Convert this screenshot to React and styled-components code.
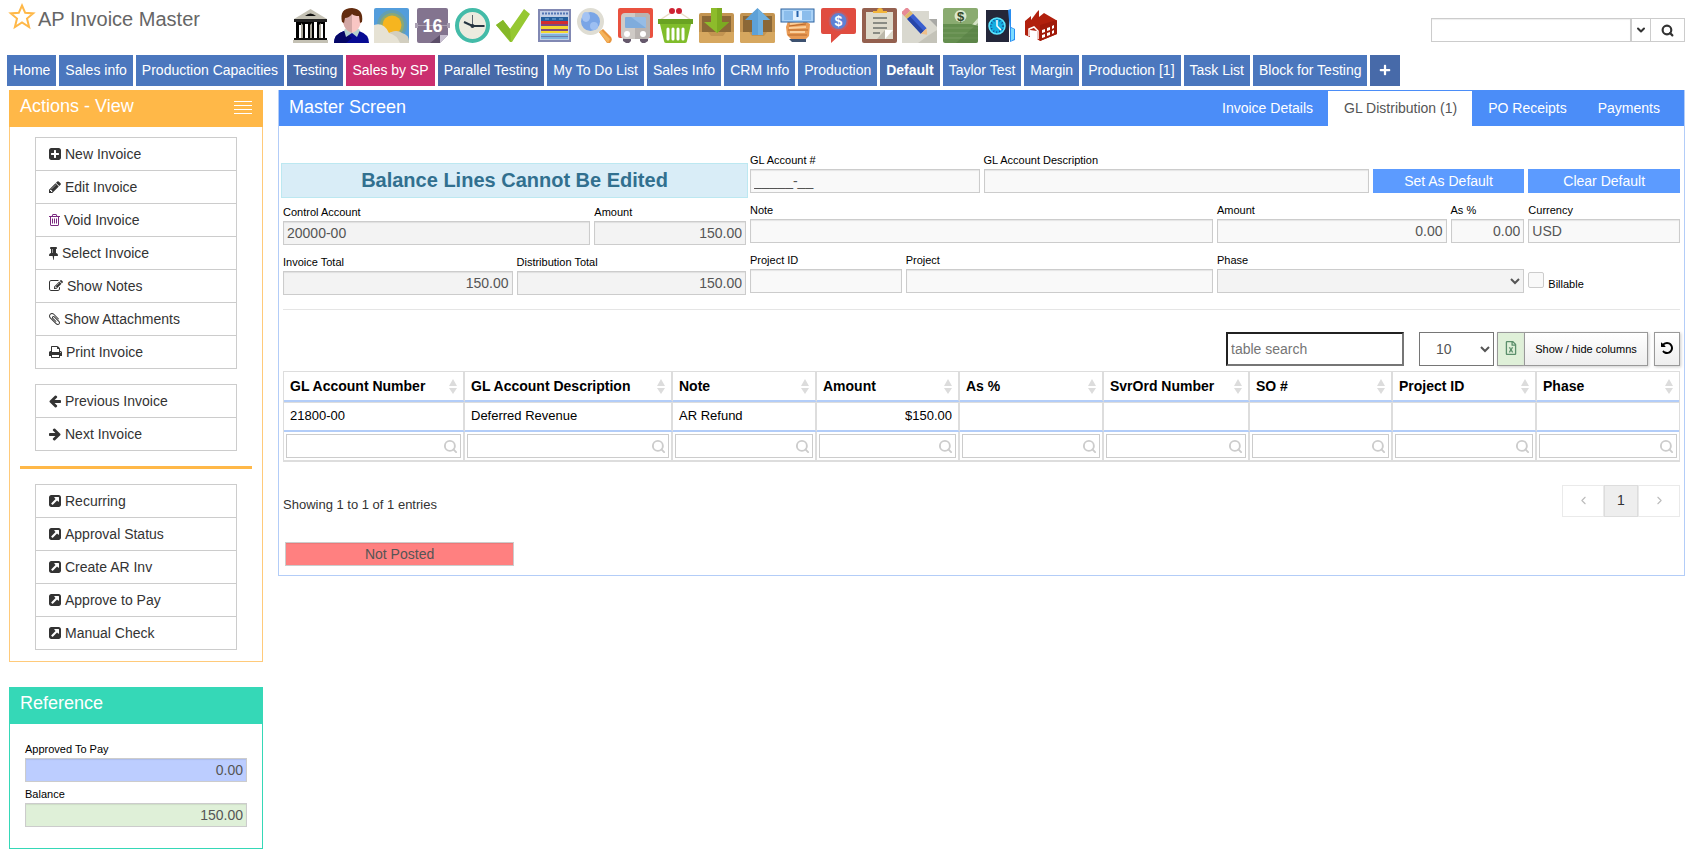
import React from 'react';
import styled, { createGlobalStyle } from 'styled-components';
import { FaRegFileExcel, FaPlus } from 'react-icons/fa';
import { ChevronDown, ChevronLeft, ChevronRight, Search } from 'lucide-react';

const GlobalStyle = createGlobalStyle`
  * {
    box-sizing: border-box;
  }
  body {
    margin: 0;
    background: #fff;
    color: #333;
    font-family: "Liberation Sans", Arial, sans-serif;
    font-size: 14px;
  }
  button, input, select {
    font-family: inherit;
    margin: 0;
    border-radius: 0;
  }
`;

const Header = styled.header`
  display: flex;
  align-items: flex-start;
  justify-content: space-between;
  height: 55px;
  padding: 0 5px 0 8px;
`;

const TitleBar = styled.div`
  display: flex;
  flex: 0 0 285px;
  gap: 2px;
  padding-top: 2px;
`;

const StarButton = styled.button`
  display: flex;
  padding: 0;
  border: none;
  background: none;
`;

const PageTitle = styled.h1`
  margin: 0;
  padding-top: 5px;
  color: #666;
  font-size: 20px;
  font-weight: 400;
  line-height: 24px;
`;

const AppBar = styled.nav`
  display: flex;
  flex: 0 0 766px;
  justify-content: space-between;
  padding-top: 8px;
`;

const AppLink = styled.a`
  display: block;
  width: 35px;
  height: 35px;

  svg {
    display: block;
  }
`;

const SearchForm = styled.form`
  display: flex;
  width: 254px;
  height: 24px;
  margin: 18px 0 0 auto;
`;

const SearchInput = styled.input`
  flex: 1;
  min-width: 0;
  border: 1px solid #ccc;
  box-shadow: inset 0 1px 1px #eee;
`;

const SearchButton = styled.button`
  display: flex;
  align-items: center;
  justify-content: center;
  width: ${(p) => (p.$wide ? '34px' : '20px')};
  padding: 0;
  border: 1px solid #ccc;
  border-left-width: ${(p) => (p.$wide ? '0' : '1px')};
  background: #fff;
  color: #333;
`;

const TabBar = styled.nav`
  display: flex;
  gap: 3px;
  padding: 0 7px;
`;

const TAB_COLORS = {
  normal: '#4b77be',
  dark: '#476aa9',
  pink: '#cb2f6f',
};

const DashTab = styled.a`
  display: flex;
  align-items: center;
  height: 31px;
  padding: 0 6px 1px;
  background: ${(p) => TAB_COLORS[p.$tone]};
  color: #fff;
  font-weight: ${(p) => (p.$active ? 700 : 400)};
  text-decoration: none;
  white-space: nowrap;
`;

const AddTab = styled.button`
  width: 30px;
  height: 31px;
  padding: 0;
  border: none;
  background: #476aa9;
  color: #fff;
  font-size: 11px;
`;

const Layout = styled.div`
  display: flex;
  align-items: flex-start;
  gap: 15px;
  padding: 4px 5px 5px 9px;
`;

const Sidebar = styled.aside`
  display: flex;
  flex: 0 0 254px;
  flex-direction: column;
  gap: 25px;
`;

const Panel = styled.section`
  border: 1px solid ${(p) => p.$border};
  border-top: none;
`;

const PanelHeader = styled.div`
  display: flex;
  justify-content: space-between;
  height: 37px;
  margin: 0 -1px;
  padding: 0 11px;
  background: ${(p) => p.$color};
`;

const PanelTitle = styled.h2`
  margin: 0;
  color: #fff;
  font-size: 18px;
  font-weight: 400;
  line-height: 32px;
`;

const MenuToggle = styled.button`
  display: flex;
  flex-direction: column;
  gap: 3px;
  width: 18px;
  padding: 11px 0 0;
  border: none;
  background: none;

  span {
    width: 18px;
    height: 1px;
    background: #fff;
  }
`;

const MenuBody = styled.div`
  display: flex;
  flex-direction: column;
  gap: 15px;
  padding: 10px 10px 11px;
`;

const MenuList = styled.ul`
  margin: 0 15px;
  padding: 0;
  border: 1px solid #ccc;
  list-style: none;

  li + li {
    border-top: 1px solid #ccc;
  }
`;

const MenuLink = styled.a`
  display: flex;
  align-items: center;
  gap: 4px;
  height: 32px;
  padding: 0 13px;
  color: #333;
  text-decoration: none;
`;

const MenuDivider = styled.hr`
  width: 100%;
  height: 3px;
  margin: 0;
  border: none;
  background: #ffb848;
`;

const ReferenceBody = styled.div`
  display: grid;
  gap: 3px;
  padding: 16px 15px 21px;
`;

const Main = styled.main`
  flex: 1;
  min-width: 0;
`;

const MainHeader = styled.div`
  display: flex;
  justify-content: space-between;
  height: 36px;
  padding: 1px 9px 0 10px;
  background: #4b8df8;
`;

const PanelTabs = styled.div`
  display: flex;
`;

const PanelTab = styled.button`
  padding: 0 15px 2px 16px;
  border: none;
  background: ${(p) => (p.$active ? '#fff' : 'transparent')};
  color: ${(p) => (p.$active ? '#555' : '#fff')};
  font-size: 14px;
  white-space: nowrap;
`;

const MainBody = styled.div`
  padding: 25px 4px 9px;
`;

const FormGrid = styled.div`
  display: grid;
  grid-template-columns: repeat(18, minmax(0, 1fr));
  column-gap: 4px;
  padding-bottom: 14px;
  border-bottom: 1px solid #e5e5e5;
`;

const FormSide = styled.div`
  display: grid;
  grid-column: span ${(p) => p.$span};
  grid-template-columns: subgrid;
  align-content: start;
  row-gap: 8px;
`;

const LeftSide = styled(FormSide)`
  padding-top: 12px;
`;

const Alert = styled.div`
  grid-column: 1 / -1;
  margin: 0 -2px -3px;
  border: 1px solid #bce8f1;
  background: #d9edf7;
  color: #31708f;
  font-size: 20px;
  font-weight: 700;
  line-height: 33px;
  text-align: center;
`;

const FieldBox = styled.div`
  display: flex;
  flex-direction: column;
  justify-content: flex-end;
  grid-column: span ${(p) => p.$span};
  min-width: 0;
`;

const Label = styled.label`
  color: #000;
  font-size: 11px;
  line-height: 18px;
  white-space: nowrap;
`;

const TextInput = styled.input`
  width: 100%;
  height: 24px;
  padding: 0 3px;
  border: 1px solid #ccc;
  background: ${(p) => p.$bg || '#f9f9f9'};
  box-shadow: inset 0 1px 1px rgba(0, 0, 0, 0.08);
  color: #555;
  font-size: 14px;
  text-align: ${(p) => p.$align || 'left'};
`;

const PhaseSelect = styled.select`
  width: 100%;
  height: 24px;
  border: 1px solid #ccc;
  background: #f3f3f3;
  color: #555;
  font-size: 14px;
`;

const DefaultButton = styled.button`
  height: 24px;
  padding: 0;
  border: none;
  background: #5c9bff;
  color: #fff;
  font-size: 14px;
`;

const CheckRow = styled.div`
  display: flex;
  align-items: center;
  gap: 4px;
  height: 24px;
`;

const Checkbox = styled.input`
  appearance: none;
  width: 16px;
  height: 16px;
  margin-bottom: 2px;
  border: 1px solid #ccc;
  border-radius: 2px;
  background: #f9f9f9;
`;

const CheckLabel = styled(Label)`
  padding-top: 6px;
`;

const Toolbar = styled.div`
  display: flex;
  justify-content: flex-end;
  height: 34px;
  margin: 22px 0 5px;
`;

const TableSearch = styled.input`
  width: 178px;
  margin-right: 15px;
  padding: 0 3px;
  border: 2px inset #767676;
  font-size: 14px;

  &::placeholder {
    color: #757575;
  }
`;

const PageSize = styled.select`
  width: 75px;
  margin-right: 3px;
  padding: 0 0 0 12px;
  border: 1px solid #767676;
  background: #fff;
  color: #555;
  font-size: 14px;
`;

const ToolButton = styled.button`
  display: flex;
  align-items: center;
  justify-content: center;
  padding: 0 8px;
  border: 1px solid #999;
  background: ${(p) => (p.$green ? '#dff0d8' : 'linear-gradient(#fff, #eee)')};
  box-shadow: 1px 1px 3px #ccc;
  color: ${(p) => (p.$green ? '#5b8f6b' : '#000')};
  font-size: 11px;
  white-space: nowrap;
`;

const ExcelButton = styled(ToolButton)`
  width: 27px;
  padding: 0 0 2px;
  border-right: none;
`;

const ColumnsButton = styled(ToolButton)`
  width: 124px;
`;

const ResetButton = styled(ToolButton)`
  width: 26px;
  margin-left: 6px;
  padding: 0 0 2px;
`;

const Table = styled.table`
  width: 100%;
  border-right: 1px solid #ddd;
  border-left: 1px solid #ddd;
  border-spacing: 0;
  table-layout: fixed;
  color: #000;
  font-size: 13px;
`;

const HeadCell = styled.th`
  height: 31px;
  padding: 0 6px;
  border-top: 1px solid #ddd;
  border-right: 2px solid #ddd;
  border-bottom: 2px solid #b3cdf8;
  font-size: 14px;
  text-align: left;
  white-space: nowrap;

  &:last-child {
    border-right: none;
  }
`;

const HeadContent = styled.div`
  display: flex;
  align-items: center;
  justify-content: space-between;
`;

const Cell = styled.td`
  height: 30px;
  padding: 0 6px 2px;
  border-top: 1px solid #ddd;
  border-right: 2px solid #ddd;
  border-bottom: 2px solid #b3cdf8;
  text-align: ${(p) => (p.$right ? 'right' : 'left')};

  &:last-child {
    border-right: none;
  }
`;

const FilterCell = styled.td`
  padding: 2px;
  border-right: 2px solid #ddd;
  border-bottom: 2px solid #ddd;

  &:last-child {
    border-right: none;
  }
`;

const FilterBox = styled.label`
  display: flex;
  align-items: center;
  height: 24px;
  padding-right: 2px;
  border: 1px solid #ccc;
  color: #ccc;
`;

const FilterInput = styled.input`
  flex: 1;
  min-width: 0;
  height: 20px;
  border: none;
  background: none;
`;

const TableFooter = styled.div`
  display: flex;
  align-items: flex-start;
  justify-content: space-between;
  margin: 23px 0 25px;
`;

const EntryCount = styled.div`
  padding-top: 10px;
  font-size: 13px;
  line-height: 20px;
`;

const Pager = styled.div`
  display: flex;
`;

const PageButton = styled.button`
  display: flex;
  align-items: center;
  justify-content: center;
  width: ${(p) => (p.$current ? '34px' : '42px')};
  height: 32px;
  padding: 0 0 2px;
  border: 1px solid ${(p) => (p.$current ? '#ddd' : '#eaeaea')};
  background: ${(p) => (p.$current ? '#eee' : '#fff')};
  color: ${(p) => (p.$current ? '#333' : '#bbb')};
  font-size: 14px;
`;

const StatusRow = styled.div`
  display: grid;
  grid-template-columns: repeat(6, minmax(0, 1fr));
  column-gap: 4px;
  padding-left: 2px;
`;

// 14px glyphs, each one [left edge, advance, path] on a 1792 unit em
const GLYPHS = {
  plusSquare: [128, 1536, 'M1408 960v-128q0-26-19-45t-45-19h-320v-320q0-26-19-45t-45-19h-128q-26 0-45 19t-19 45v320h-320q-26 0-45 19t-19 45v128q0 26 19 45t45 19h320v320q0 26 19 45t45 19h128q26 0 45-19t19-45v-320h320q26 0 45-19t19-45zm256-544v960q0 119-84.5 203.5t-203.5 84.5h-960q-119 0-203.5-84.5t-84.5-203.5v-960q0-119 84.5-203.5t203.5-84.5h960q119 0 203.5 84.5t84.5 203.5z'],
  pencil: [128, 1536, 'M491 1536l91-91-235-235-91 91v107h128v128h107zm523-928q0-22-22-22-10 0-17 7l-542 542q-7 7-7 17 0 22 22 22 10 0 17-7l542-542q7-7 7-17zm-54-192l416 416-832 832h-416v-416zm683 96q0 53-37 90l-166 166-416-416 166-165q36-38 90-38 53 0 91 38l235 234q37 39 37 91z'],
  trash: [192, 1408, 'M704 736v576q0 14-9 23t-23 9h-64q-14 0-23-9t-9-23v-576q0-14 9-23t23-9h64q14 0 23 9t9 23zm256 0v576q0 14-9 23t-23 9h-64q-14 0-23-9t-9-23v-576q0-14 9-23t23-9h64q14 0 23 9t9 23zm256 0v576q0 14-9 23t-23 9h-64q-14 0-23-9t-9-23v-576q0-14 9-23t23-9h64q14 0 23 9t9 23zm128 724v-948h-896v948q0 22 7 40.5t14.5 27 10.5 8.5h832q3 0 10.5-8.5t14.5-27 7-40.5zm-672-1076h448l-48-117q-7-9-17-11h-317q-10 2-17 11zm928 32v64q0 14-9 23t-23 9h-96v948q0 83-47 143.5t-113 60.5h-832q-66 0-113-58.5t-47-141.5v-952h-96q-14 0-23-9t-9-23v-64q0-14 9-23t23-9h309l70-167q15-37 54-63t79-26h320q40 0 79 26t54 63l70 167h309q14 0 23 9t9 23z'],
  pin: [320, 1152, 'M800 864v-448q0-14-9-23t-23-9-23 9-9 23v448q0 14 9 23t23 9 23-9 9-23zm672 352q0 26-19 45t-45 19h-429l-51 483q-2 12-10.5 20.5t-20.5 8.5h-1q-27 0-32-27l-76-485h-404q-26 0-45-19t-19-45q0-123 78.5-221.5t177.5-98.5v-512q-52 0-90-38t-38-90 38-90 90-38h640q52 0 90 38t38 90-38 90-90 38v512q99 0 177.5 98.5t78.5 221.5z'],
  edit: [0, 1792, 'M888 1184l116-116-152-152-116 116v56h96v96h56zm440-720q-16-16-33 1l-350 350q-17 17-1 33t33-1l350-350q17-17 1-33zm80 594v190q0 119-84.5 203.5t-203.5 84.5h-832q-119 0-203.5-84.5t-84.5-203.5v-832q0-119 84.5-203.5t203.5-84.5h832q63 0 117 25 15 7 18 23 3 17-9 29l-49 49q-14 14-32 8-23-6-45-6h-832q-66 0-113 47t-47 113v832q0 66 47 113t113 47h832q66 0 113-47t47-113v-126q0-13 9-22l64-64q15-15 35-7t20 29zm-96-738l288 288-672 672h-288v-288zm444 132l-92 92-288-288 92-92q28-28 68-28t68 28l152 152q28 28 28 68t-28 68z'],
  clip: [192, 1408, 'M1596 1385q0 117-79 196t-196 79q-135 0-235-100l-777-776q-113-115-113-271 0-159 110-270t269-111q158 0 273 113l605 606q10 10 10 22 0 16-30.5 46.5t-46.5 30.5q-13 0-23-10l-606-607q-79-77-181-77-106 0-179 75t-73 181q0 105 76 181l776 777q63 63 145 63 64 0 106-42t42-106q0-82-63-145l-581-581q-26-24-60-24-29 0-48 19t-19 48q0 32 25 59l410 410q10 10 10 22 0 16-31 47t-47 31q-12 0-22-10l-410-410q-63-61-63-149 0-82 57-139t139-57q88 0 149 63l581 581q100 98 100 235z'],
  print: [64, 1664, 'M448 1536h896v-256h-896v256zm0-640h896v-384h-160q-40 0-68-28t-28-68v-160h-640v640zm1152 64q0-26-19-45t-45-19-45 19-19 45 19 45 45 19 45-19 19-45zm128 0v416q0 13-9.5 22.5t-22.5 9.5h-224v160q0 40-28 68t-68 28h-960q-40 0-68-28t-28-68v-160h-224q-13 0-22.5-9.5t-9.5-22.5v-416q0-79 56.5-135.5t135.5-56.5h64v-544q0-40 28-68t68-28h672q40 0 88 20t76 48l152 152q28 28 48 76t20 88v256h64q79 0 135.5 56.5t56.5 135.5z'],
  arrowLeft: [128, 1536, 'M1664 896v128q0 53-32.5 90.5t-84.5 37.5h-704l293 294q38 36 38 90t-38 90l-75 76q-37 37-90 37-52 0-91-37l-651-652q-37-37-37-90 0-52 37-91l651-650q38-38 91-38 52 0 90 38l75 74q38 38 38 91t-38 91l-293 293h704q52 0 84.5 37.5t32.5 90.5z'],
  arrowRight: [128, 1536, 'M128 896v128q0 53 32.5 90.5t84.5 37.5h704l-293 294q-38 36-38 90t38 90l75 76q37 37 90 37 52 0 91-37l651-652q37-37 37-90 0-52-37-91l-651-650q-38-38-91-38-52 0-90 38l-75 74q-38 38-38 91t38 91l293 293h-704q-52 0-84.5 37.5t-32.5 90.5z'],
  external: [128, 1536, 'M1408 928v-480q0-26-19-45t-45-19h-480q-42 0-59 39-17 41 14 70l144 144-534 534q-19 19-19 45t19 45l102 102q19 19 45 19t45-19l534-534 144 144q18 19 45 19 12 0 25-5 39-17 39-59zm256-512v960q0 119-84.5 203.5t-203.5 84.5h-960q-119 0-203.5-84.5t-84.5-203.5v-960q0-119 84.5-203.5t203.5-84.5h960q119 0 203.5 84.5t84.5 203.5z'],
  undo: [128, 1536, 'M1664 896q0 156-61 298t-164 245-245 164-298 61q-172 0-327-72.5t-264-204.5q-7-10-6.5-22.5t8.5-20.5l137-138q10-9 25-9 16 2 23 12 73 95 179 147t225 52q104 0 198.5-40.5t163.5-109.5 109.5-163.5 40.5-198.5-40.5-198.5-109.5-163.5-163.5-109.5-198.5-40.5q-98 0-188 35.5t-160 101.5l137 138q31 30 14 69-17 40-59 40h-448q-26 0-45-19t-19-45v-448q0-42 40-59 39-17 69 14l130 129q107-101 244.5-156.5t284.5-55.5q156 0 298 61t245 164 164 245 61 298z'],
};

const Glyph = ({ name, color = 'currentColor' }) => {
  const [left, advance, d] = GLYPHS[name];
  return (
    <svg width={advance / 128} height="14" viewBox={`${left} 0 ${advance} 1792`} fill={color} aria-hidden="true">
      <path d={d} />
    </svg>
  );
};

const SortIcon = () => (
  <svg width="8" height="15" viewBox="0 0 8 15" fill="#dcdcdc" aria-hidden="true">
    <path d="M4 0l4 7H0zM0 9h8l-4 6z" />
  </svg>
);

// Application launcher icons, all on a 35 x 35 box
const APPS = [
  {
    name: 'Bank',
    art: (
      <>
        <path d="M1 11L17.5 1 34 11z" fill="#c4c1b4" />
        <path d="M12 8q5.5-5 11 0z" fill="#111" />
        <path d="M1 11h33v3H1z" fill="#222" />
        <path d="M3 14h29v16H3z" fill="#000" />
        <path d="M6 17h2v13H6zM12 16h3v14h-3zM21 14h3v16h-3zM28 16h2v14h-2z" fill="#fff" />
        <path d="M8 15l2 2v13H8zM17 17l2-2v15h-2zM26 17l2-2v15h-2z" fill="#aaa79b" />
        <path d="M1 30h33v2H1z" fill="#111" />
        <path d="M0 32h35v3H0z" fill="#c4c1b4" />
      </>
    ),
  },
  {
    name: 'Customer',
    art: (
      <>
        <path d="M0 35q0-9 10-12h15q10 3 10 12z" fill="#070b93" />
        <path d="M0 35q0-9 10-12l8 7-6 5z" fill="#050766" />
        <path d="M10 22l3-2h10l3 2-3 7-5-4-6 4z" fill="#b5d1cd" />
        <path d="M9 11q0-8 9-8t9 8q0 8-5 12l-4 2-4-2q-5-4-5-12z" fill="#f9c6c4" />
        <path d="M9 11q0-8 9-8v22l-4-2q-5-4-5-12z" fill="#d3a7a5" />
        <path d="M8 14Q5 0 18 0q12 1 10 14l-2 1-1-7q-5 0-7-2-3 4-7 4l-1 5z" fill="#622b0e" />
      </>
    ),
  },
  {
    name: 'Weather',
    art: (
      <>
        <rect width="35" height="35" rx="2" fill="#539ddc" />
        <circle cx="18" cy="17" r="15" fill="#659fb0" />
        <circle cx="18" cy="17" r="12" fill="#8ca873" />
        <circle cx="18" cy="17" r="9.5" fill="#f6b51f" />
        <path d="M0 17q10-3 15 8 8-3 11 0l8 4v6H0z" fill="#e6e2d4" />
        <path d="M15 25q8-4 13 0 7 2 7 8v2H26q-3-8-11-10z" fill="#d2cebf" />
      </>
    ),
  },
  {
    name: 'Calendar',
    art: (
      <>
        <path d="M4 0h27q2 0 2 2v25l-8 8H4q-2 0-2-2V2q0-2 2-2z" fill="#83748f" />
        <path d="M0 15h3v5H0zM32 15h3v5h-3z" fill="#aaa0b3" />
        <path d="M2 17h31v1H2z" fill="#a99fb1" />
        <path d="M15 35l10-8v8z" fill="#5c4e69" />
        <path d="M25 27h8l-8 8z" fill="#c7bfd0" />
        <text x="17.5" y="24" fill="#fff" fontFamily="Liberation Sans" fontSize="18" fontWeight="700" textAnchor="middle">16</text>
      </>
    ),
  },
  {
    name: 'Time Clock',
    art: (
      <>
        <circle cx="17.5" cy="17.5" r="15.5" fill="#ecebdf" stroke="#43bba8" strokeWidth="4" />
        <path d="M9 14l8.500 4h12" fill="none" stroke="#263541" strokeWidth="2" />
        <path d="M17.5 7v11" stroke="#5a646c" />
        <circle cx="17.5" cy="18" r="2" fill="#263541" />
      </>
    ),
  },
  {
    name: 'Approve',
    art: (
      <>
        <path d="M0 17l7-5 7 9L28 1l6 5-18 28h-2z" fill="#96c832" />
        <path d="M0 17l7-5 7 9 1 13z" fill="#85b829" />
      </>
    ),
  },
  {
    name: 'Schedule',
    art: (
      <>
        <rect x="2" y="2" width="31" height="31" fill="#c3cfe6" stroke="#8188b3" strokeWidth="2" />
        <path d="M5 5.500h26" stroke="#5577b4" strokeWidth="2" strokeDasharray="2 1" />
        <path d="M4 9h27v4H4z" fill="#245f9d" />
        <path d="M8 11h19" stroke="#7fb1dc" strokeDasharray="4 3" />
        <path d="M4 13h27v3H4z" fill="#d22c30" />
        <path d="M4 18h27v3H4zM4 23h27v2H4z" fill="#f4d82f" />
        <path d="M4 16h27v2H4zM4 21h27v2H4z" fill="#7c4a7c" />
        <path d="M4 26h27v5H4z" fill="#7fb4dc" />
        <path d="M4 28.500h27" stroke="#6d7cae" />
      </>
    ),
  },
  {
    name: 'Lookup',
    art: (
      <>
        <path d="M22 24l4-3 8 8q2 3-1 6h-3z" fill="#e8943c" />
        <path d="M22 24l2-2 9 9-2 4z" fill="#f4b45c" />
        <circle cx="13.5" cy="13.500" r="11.500" fill="#7aa5e6" stroke="#dfddd3" strokeWidth="4" />
        <ellipse cx="9" cy="9" rx="4" ry="5" fill="#a4c3f3" />
        <circle cx="17" cy="18" r="4" fill="#9dbff2" />
      </>
    ),
  },
  {
    name: 'Shipping',
    art: (
      <>
        <rect width="35" height="30" rx="2" fill="#e9513f" />
        <path d="M5 30h8v3l-2 2H8l-3-2zM22 30h8v3l-3 2h-3l-2-2z" fill="#65586c" />
        <rect x="3" y="5" width="29" height="26" rx="4" fill="#cfcac6" />
        <path d="M17 5h11q4 0 4 4v18q0 4-4 4H17z" fill="#b9b3b0" />
        <rect x="7" y="9" width="21" height="11" rx="1" fill="#7facdc" />
        <path d="M13 9h14q1 0 1 1v10z" fill="#96bce5" />
        <circle cx="9" cy="26" r="3" fill="#fff" />
        <circle cx="25" cy="26" r="3" fill="#fff" />
      </>
    ),
  },
  {
    name: 'Purchasing',
    art: (
      <>
        <path d="M2 12L14 4M33 12L21 4" stroke="#eadcc5" strokeWidth="1.5" />
        <circle cx="14" cy="3" r="3" fill="#ce2333" />
        <circle cx="21" cy="3" r="3" fill="#ce2333" />
        <path d="M0 11h35v5H0z" fill="#6aa322" />
        <path d="M2 16h31l-4 17q0 2-2 2H8q-2 0-2-2z" fill="#80bd2b" />
        <path d="M10 21v10M15 21v10M20 21v10M25 21v10" stroke="#fff" strokeWidth="3" strokeLinecap="round" />
      </>
    ),
  },
  {
    name: 'Receiving',
    art: (
      <>
        <rect y="5" width="35" height="30" rx="2" fill="#c39451" />
        <path d="M3 8h29v16H3z" fill="#8b6837" />
        <path d="M0 24h9l3 4h12l3-4h8v9q0 2-2 2H2q-2 0-2-2z" fill="#d6a75f" />
        <path d="M12 0h11v14h7L18 25 5 14h7z" fill="#8dbc2b" />
        <path d="M18 0h5v14h7L18 25z" fill="#7caa21" />
      </>
    ),
  },
  {
    name: 'Sending',
    art: (
      <>
        <rect y="5" width="35" height="30" rx="2" fill="#c39451" />
        <path d="M3 8h29v16H3z" fill="#8b6837" />
        <path d="M0 24h9l3 4h12l3-4h8v9q0 2-2 2H2q-2 0-2-2z" fill="#d6a75f" />
        <path d="M12 27V12H5L17.5 0 30 12h-7v15z" fill="#5da1d7" />
        <path d="M18 27h5V12h7L18 1z" fill="#6fb0e0" />
      </>
    ),
  },
  {
    name: 'Payments',
    art: (
      <>
        <path d="M8 13l5-2 12 2 5 3-1 12-4 4H12l-5-5-1-8z" fill="#e99a54" />
        <path d="M9 18l17-2M8 22h20M8 27h19" stroke="#b8682c" />
        <path d="M10 16l13-2M9 20l17-1M10 24h15" stroke="#fbd09c" strokeWidth="2" />
        <path d="M9 31h17v3H12z" fill="#3d5170" />
        <rect x="1" y="1" width="33" height="13" fill="#a9d2f7" stroke="#2c63a0" />
        <path d="M4 3h27v9H4z" fill="#8bbdec" />
        <path d="M13 3h9v9h-9z" fill="#dff0ff" />
        <path d="M17.5 3v6" stroke="#2463ac" strokeWidth="2" />
      </>
    ),
  },
  {
    name: 'Quotes',
    art: (
      <>
        <path d="M2 0h31q2 0 2 2v22q0 2-2 2H20L10 35v-9H2q-2 0-2-2V2q0-2 2-2z" fill="#e04c40" />
        <circle cx="17.5" cy="13" r="9" fill="#5e81d4" stroke="#c55b63" strokeWidth="2" />
        <text x="17.5" y="18" fill="#fff" fontFamily="Liberation Sans" fontSize="14" fontWeight="700" textAnchor="middle">$</text>
      </>
    ),
  },
  {
    name: 'Orders',
    art: (
      <>
        <rect width="35" height="35" rx="2" fill="#94604f" />
        <path d="M4 4h27v27H4z" fill="#dedacb" />
        <path d="M11 5V3h4q0-3 3-3t3 3h4v2z" fill="#f1b43b" />
        <path d="M11 10h14M11 15h14M11 20h14M11 25h7" stroke="#898b83" strokeWidth="2" />
        <path d="M15 31l8-9v9z" fill="#bcb8aa" />
        <path d="M23 22h8l-8 9z" fill="#fff" />
      </>
    ),
  },
  {
    name: 'Notes',
    art: (
      <>
        <path d="M0 3h27v8h8v24H0z" fill="#d9d8cf" />
        <path d="M27 11h8v8z" fill="#a9a9a6" />
        <path d="M27 27l8-5v13H16z" fill="#c4c3b9" />
        <path d="M27 3h8v8z" fill="#fff" />
        <g transform="translate(4 4) rotate(47)">
          <path d="M-3-4h5v8h-5z" fill="#e78a95" />
          <path d="M2-4h4v8H2z" fill="#dfb96b" />
          <path d="M6-4h20v8H6z" fill="#3a5fd0" />
          <path d="M6 0h20v4H6z" fill="#2846a8" />
          <path d="M26-4l5 4-5 4z" fill="#efc08a" />
        </g>
      </>
    ),
  },
  {
    name: 'Cash',
    art: (
      <>
        <path d="M2 0h31q2 0 2 2v16H0V2q0-2 2-2z" fill="#8aab70" />
        <path d="M28 18h7v-8z" fill="#d5e2c5" />
        <path d="M0 16h28l7 2v15q0 2-2 2H2q-2 0-2-2z" fill="#648e4e" />
        <path d="M0 20h35M0 25h35M0 30h35" stroke="#7b9e64" />
        <circle cx="17.5" cy="8" r="6" fill="#dbe7cc" />
        <text x="17.5" y="13" fill="#32472a" fontFamily="Liberation Sans" fontSize="13" fontWeight="700" textAnchor="middle">$</text>
        <path d="M35 15v18q0 2-2 2H13z" fill="#547b41" opacity="0.5" />
      </>
    ),
  },
  {
    name: 'Time Sheet',
    art: (
      <>
        <path d="M3 2h23v32H3z" fill="#24273a" />
        <path d="M25 2l3-1v18l4 2v11l-5 2V22z" fill="#298df0" />
        <path d="M28 20l3 1v10l-3 2z" fill="#7cdcff" />
        <circle cx="14" cy="18" r="8" fill="#15aee2" stroke="#5fe5ff" strokeWidth="1.5" />
        <circle cx="14" cy="18" r="6" fill="none" stroke="#173f82" strokeWidth="1.500" strokeDasharray="1 2" />
        <path d="M14 12v6l4 4" fill="none" stroke="#fff" strokeWidth="1.5" />
      </>
    ),
  },
  {
    name: 'Manufacturing',
    art: (
      <>
        <path d="M1 13l6-5v4l6-8 2-2v7l5-4 12 7 1 14L16 33l-3-2v-8l-7-1v7l-5-2z" fill="#b1200d" />
        <path d="M16 17l17-5v14l-17 7z" fill="#a01a0a" />
        <path d="M5 28v-7l5-2 4 4v8" fill="none" stroke="#fff" strokeWidth="1.5" />
        <path d="M18 22l3-1v3l-3 1zM23 20l3-1v3l-3 1zM28 18l2-1v3l-2 1zM18 27l3-1v3l-3 1zM23 25l3-1v3l-3 1zM28 23l2-1v3l-2 1z" fill="#fff" />
      </>
    ),
  },
];

const TABS = [
  { label: 'Home' },
  { label: 'Sales info' },
  { label: 'Production Capacities' },
  { label: 'Testing', tone: 'dark' },
  { label: 'Sales by SP', tone: 'pink' },
  { label: 'Parallel Testing', tone: 'dark' },
  { label: 'My To Do List' },
  { label: 'Sales Info' },
  { label: 'CRM Info' },
  { label: 'Production' },
  { label: 'Default', tone: 'dark', active: true },
  { label: 'Taylor Test' },
  { label: 'Margin' },
  { label: 'Production [1]' },
  { label: 'Task List' },
  { label: 'Block for Testing' },
];

const INVOICE_ACTIONS = [
  { label: 'New Invoice', icon: 'plusSquare' },
  { label: 'Edit Invoice', icon: 'pencil' },
  { label: 'Void Invoice', icon: 'trash', color: '#7b2a80' },
  { label: 'Select Invoice', icon: 'pin' },
  { label: 'Show Notes', icon: 'edit' },
  { label: 'Show Attachments', icon: 'clip' },
  { label: 'Print Invoice', icon: 'print' },
];

const STEP_ACTIONS = [
  { label: 'Previous Invoice', icon: 'arrowLeft' },
  { label: 'Next Invoice', icon: 'arrowRight' },
];

const LINK_ACTIONS = ['Recurring', 'Approval Status', 'Create AR Inv', 'Approve to Pay', 'Manual Check'].map(
  (label) => ({ label, icon: 'external' })
);

const COLUMNS = [
  { label: 'GL Account Number', width: 181 },
  { label: 'GL Account Description', width: 208 },
  { label: 'Note', width: 144 },
  { label: 'Amount', width: 143, right: true },
  { label: 'As %', width: 144 },
  { label: 'SvrOrd Number', width: 146 },
  { label: 'SO #', width: 143 },
  { label: 'Project ID', width: 144 },
  { label: 'Phase', width: 142 },
];

const ROWS = [['21800-00', 'Deferred Revenue', 'AR Refund', '$150.00', '', '', '', '', '']];

const ActionMenu = ({ items }) => (
  <MenuList>
    {items.map((item) => (
      <li key={item.label}>
        <MenuLink href="#">
          <Glyph name={item.icon} color={item.color} />
          {item.label}
        </MenuLink>
      </li>
    ))}
  </MenuList>
);

const Field = ({ id, label, span = 1, value = '', align, bg }) => (
  <FieldBox $span={span}>
    <Label htmlFor={id}>{label}</Label>
    <TextInput id={id} defaultValue={value} readOnly $align={align} $bg={bg} />
  </FieldBox>
);

const App = () => (
  <>
    <GlobalStyle />
    <Header>
      <TitleBar>
        <StarButton type="button" aria-label="Favorite">
          <svg width="28" height="28" viewBox="0 0 28 28" fill="none" stroke="#ffb848" strokeWidth="2">
            <path d="M14 3.500l3.200 7.300 8 .6-6.200 5.200 2.100 8.400L14 20.500 6.900 25 9 16.600l-6.200-5.200 8-.6z" />
          </svg>
        </StarButton>
        <PageTitle>AP Invoice Master</PageTitle>
      </TitleBar>
      <AppBar aria-label="Applications">
        {APPS.map((app) => (
          <AppLink key={app.name} href="#" aria-label={app.name}>
            <svg width="35" height="35" viewBox="0 0 35 35">{app.art}</svg>
          </AppLink>
        ))}
      </AppBar>
      <SearchForm>
        <SearchInput type="text" aria-label="Search" />
        <SearchButton type="button" aria-label="Search options">
          <ChevronDown size={12} strokeWidth={4} />
        </SearchButton>
        <SearchButton type="button" aria-label="Run search" $wide>
          <Search size={13} strokeWidth={4} />
        </SearchButton>
      </SearchForm>
    </Header>

    <TabBar>
      {TABS.map((tab) => (
        <DashTab key={tab.label} href="#" $tone={tab.tone || 'normal'} $active={tab.active}>
          {tab.label}
        </DashTab>
      ))}
      <AddTab type="button" aria-label="Add tab">
        <FaPlus size={12} />
      </AddTab>
    </TabBar>

    <Layout>
      <Sidebar>
        <Panel $border="#ffca7a">
          <PanelHeader $color="#ffb848">
            <PanelTitle>Actions - View</PanelTitle>
            <MenuToggle type="button" aria-label="Toggle menu">
              <span />
              <span />
              <span />
              <span />
            </MenuToggle>
          </PanelHeader>
          <MenuBody>
            <ActionMenu items={INVOICE_ACTIONS} />
            <ActionMenu items={STEP_ACTIONS} />
            <MenuDivider />
            <ActionMenu items={LINK_ACTIONS} />
          </MenuBody>
        </Panel>

        <Panel $border="#35d8b7">
          <PanelHeader $color="#35d8b7">
            <PanelTitle>Reference</PanelTitle>
          </PanelHeader>
          <ReferenceBody>
            <Field id="approved" label="Approved To Pay" value="0.00" align="right" bg="#bccdff" />
            <Field id="balance" label="Balance" value="150.00" align="right" bg="#dff0d8" />
          </ReferenceBody>
        </Panel>
      </Sidebar>

      <Main>
        <Panel $border="#b3cdf8">
          <MainHeader>
            <PanelTitle>Master Screen</PanelTitle>
            <PanelTabs role="tablist">
              <PanelTab type="button" role="tab">Invoice Details</PanelTab>
              <PanelTab type="button" role="tab" aria-selected="true" $active>GL Distribution (1)</PanelTab>
              <PanelTab type="button" role="tab">PO Receipts</PanelTab>
              <PanelTab type="button" role="tab">Payments</PanelTab>
            </PanelTabs>
          </MainHeader>

          <MainBody>
            <FormGrid>
              <LeftSide $span={6}>
                <Alert>Balance Lines Cannot Be Edited</Alert>
                <Field id="control" label="Control Account" span={4} value="20000-00" bg="#f3f3f3" />
                <Field id="control-amount" label="Amount" span={2} value="150.00" align="right" bg="#f3f3f3" />
                <Field id="invoice-total" label="Invoice Total" span={3} value="150.00" align="right" bg="#f3f3f3" />
                <Field id="dist-total" label="Distribution Total" span={3} value="150.00" align="right" bg="#f3f3f3" />
              </LeftSide>

              <FormSide $span={12}>
                <Field id="gl-account" label="GL Account #" span={3} value="_____-__" />
                <Field id="gl-desc" label="GL Account Description" span={5} />
                <FieldBox $span={2}>
                  <DefaultButton type="button">Set As Default</DefaultButton>
                </FieldBox>
                <FieldBox $span={2}>
                  <DefaultButton type="button">Clear Default</DefaultButton>
                </FieldBox>

                <Field id="note" label="Note" span={6} />
                <Field id="amount" label="Amount" span={3} value="0.00" align="right" />
                <Field id="as-percent" label="As %" value="0.00" align="right" />
                <Field id="currency" label="Currency" span={2} value="USD" />

                <Field id="project-id" label="Project ID" span={2} />
                <Field id="project" label="Project" span={4} />
                <FieldBox $span={4}>
                  <Label htmlFor="phase">Phase</Label>
                  <PhaseSelect id="phase">
                    <option> </option>
                  </PhaseSelect>
                </FieldBox>
                <FieldBox $span={2}>
                  <CheckRow>
                    <Checkbox type="checkbox" id="billable" />
                    <CheckLabel htmlFor="billable">Billable</CheckLabel>
                  </CheckRow>
                </FieldBox>
              </FormSide>
            </FormGrid>

            <Toolbar>
              <TableSearch type="text" placeholder="table search" aria-label="Table search" />
              <PageSize aria-label="Rows per page" defaultValue="10">
                <option>10</option>
                <option>25</option>
                <option>50</option>
              </PageSize>
              <ExcelButton type="button" aria-label="Export to Excel" $green>
                <FaRegFileExcel size={14} />
              </ExcelButton>
              <ColumnsButton type="button">Show / hide columns</ColumnsButton>
              <ResetButton type="button" aria-label="Reset">
                <Glyph name="undo" />
              </ResetButton>
            </Toolbar>

            <Table>
              <colgroup>
                {COLUMNS.map((col) => (
                  <col key={col.label} width={col.width} />
                ))}
              </colgroup>
              <thead>
                <tr>
                  {COLUMNS.map((col) => (
                    <HeadCell key={col.label}>
                      <HeadContent>
                        {col.label}
                        <SortIcon />
                      </HeadContent>
                    </HeadCell>
                  ))}
                </tr>
              </thead>
              <tbody>
                {ROWS.map((row) => (
                  <tr key={row[0]}>
                    {row.map((value, i) => (
                      <Cell key={COLUMNS[i].label} $right={COLUMNS[i].right}>{value}</Cell>
                    ))}
                  </tr>
                ))}
              </tbody>
              <tfoot>
                <tr>
                  {COLUMNS.map((col) => (
                    <FilterCell key={col.label}>
                      <FilterBox>
                        <FilterInput type="text" aria-label={`Filter ${col.label}`} />
                        <Search size={15} strokeWidth={3} />
                      </FilterBox>
                    </FilterCell>
                  ))}
                </tr>
              </tfoot>
            </Table>

            <TableFooter>
              <EntryCount>Showing 1 to 1 of 1 entries</EntryCount>
              <Pager>
                <PageButton type="button" aria-label="Previous page">
                  <ChevronLeft size={13} />
                </PageButton>
                <PageButton type="button" $current>1</PageButton>
                <PageButton type="button" aria-label="Next page">
                  <ChevronRight size={13} />
                </PageButton>
              </Pager>
            </TableFooter>

            <StatusRow>
              <TextInput aria-label="Posting status" defaultValue="Not Posted" readOnly $align="center" $bg="#ff8080" />
            </StatusRow>
          </MainBody>
        </Panel>
      </Main>
    </Layout>
  </>
);

export default App;
